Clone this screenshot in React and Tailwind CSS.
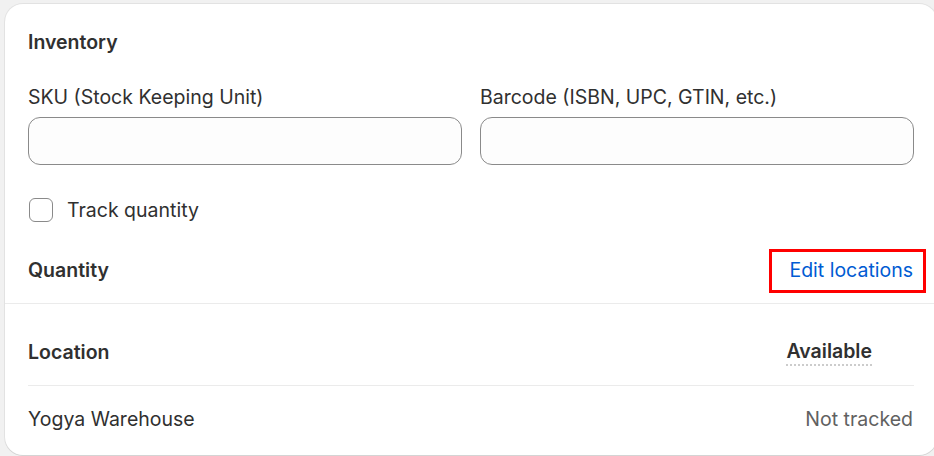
export default function App() {
  return (
    <div
      className="w-[934px] h-[456px] overflow-hidden bg-[#f1f1f1] pl-[5px] pt-[4px] text-[#303030]"
      style={{ fontFamily: "Inter, 'Noto Sans', sans-serif" }}
    >
      <div className="w-[932px] h-[451px] rounded-[18px] bg-white shadow-[0_1px_0_0_rgba(26,26,26,0.07),0_0_0_1px_rgba(0,0,0,0.06)] text-[19.5px]">
        <div className="px-[23px] pt-[24px]">
          <div className="font-semibold leading-[28px]">Inventory</div>

          <div className="mt-[27px] grid grid-cols-2 gap-[18px]">
            <div>
              <div className="leading-[28px]">SKU (Stock Keeping Unit)</div>
              <div className="mt-[6px] h-[48px] rounded-[12px] border border-[#8a8a8a] bg-[#fdfdfd]" />
            </div>
            <div>
              <div className="leading-[28px]">Barcode (ISBN, UPC, GTIN, etc.)</div>
              <div className="mt-[6px] h-[48px] rounded-[12px] border border-[#8a8a8a] bg-[#fdfdfd]" />
            </div>
          </div>

          <div className="mt-[31px] flex items-center gap-[14px]">
            <div className="ml-[1px] h-[24px] w-[24px] rounded-[6px] border border-[#8a8a8a] bg-white" />
            <div className="leading-[28px]">Track quantity</div>
          </div>

          <div className="mt-[32px] flex items-center justify-between">
            <div className="font-semibold leading-[28px]">Quantity</div>
            <div className="relative mr-[1px] leading-[28px] text-[#005bd3]">
              Edit locations
              <div className="absolute left-[-20px] right-[-13px] top-[-7px] bottom-[-9px] border-[3px] border-[#ff0000]" />
            </div>
          </div>
        </div>

        <div className="mt-[19px] border-t border-[#ebebeb]" />

        <div className="px-[23px]">
          <div className="flex items-start justify-between border-b border-[#ebebeb] pt-[34px] pb-[19px]">
            <div className="font-semibold leading-[28px]">Location</div>
            <div className="mr-[42px] border-b-2 border-dotted border-[#cccccc] font-semibold leading-[26px]">
              Available
            </div>
          </div>
          <div className="flex h-[66px] items-center justify-between">
            <div className="leading-[28px]">Yogya Warehouse</div>
            <div className="mr-[1px] leading-[28px] text-[#616161]">Not tracked</div>
          </div>
        </div>
      </div>
    </div>
  );
}
